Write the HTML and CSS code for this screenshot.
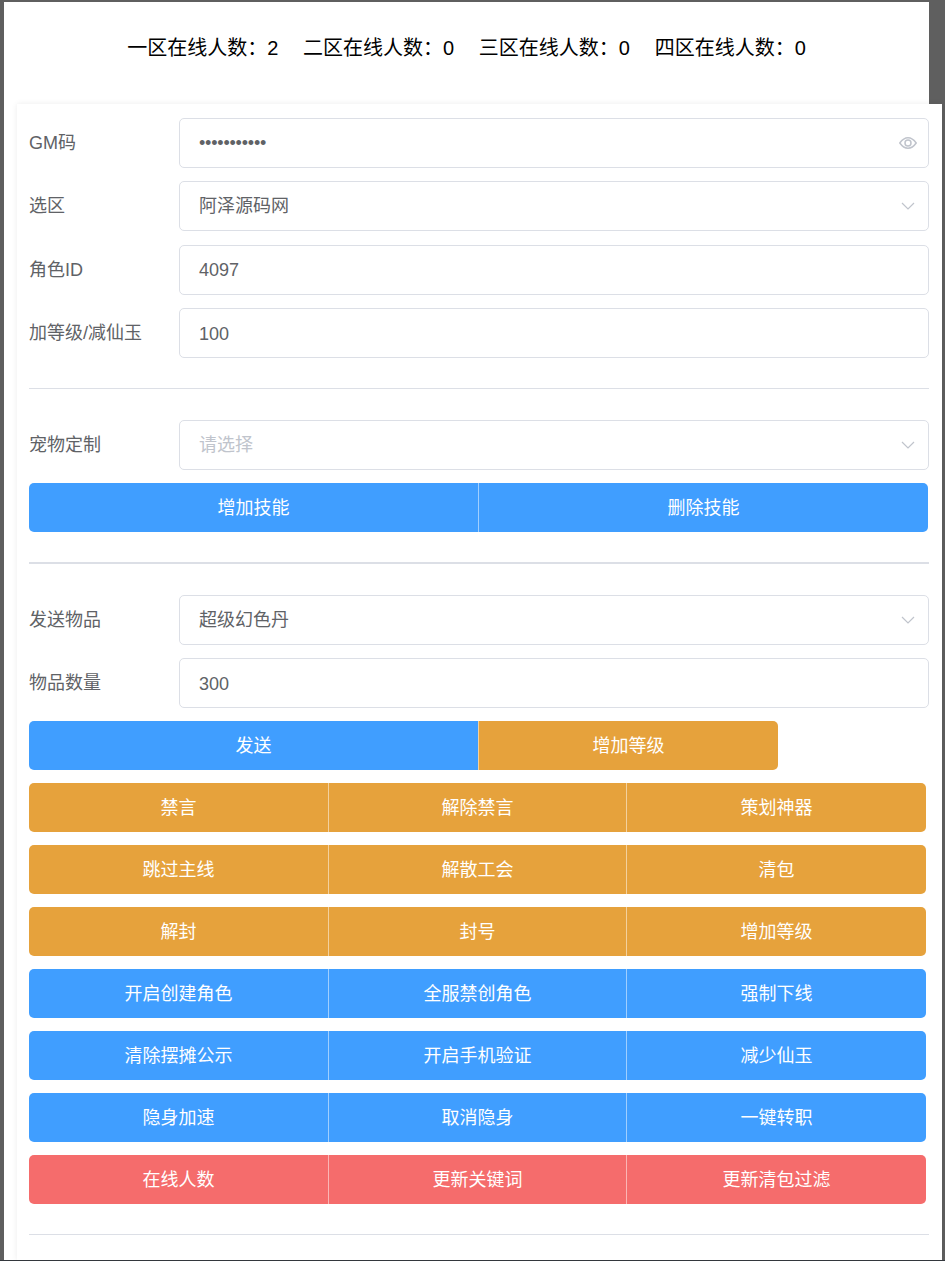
FILE: index.html
```html
<!DOCTYPE html>
<html lang="zh-CN">
<head>
<meta charset="utf-8">
<title>GM</title>
<link rel="stylesheet" href="styles.css">
</head>
<body>
<div class="frame">
  <div class="panel">
    <div class="online">
      <span>一区在线人数：2</span><span>二区在线人数：0</span><span>三区在线人数：0</span><span>四区在线人数：0</span>
    </div>
    <div class="card">
      <div class="form-group">
        <div class="row"><label class="label">GM码</label><div class="control"><span class="value dots">•••••••••••</span>
          <svg class="eye" viewBox="0 0 18 12"><path d="M0.800 6C3.300 2.500 6 0.800 9 0.800S14.700 2.500 17.200 6C14.700 9.500 12 11.200 9 11.200S3.300 9.500 0.800 6Z"/><circle cx="9" cy="6" r="3"/></svg></div></div>
        <div class="row"><label class="label">选区</label><div class="control"><span class="value cjk">阿泽源码网</span>
          <svg class="chev" viewBox="0 0 14 8"><path d="M1 1L7 7L13 1"/></svg></div></div>
        <div class="row"><label class="label">角色ID</label><div class="control"><span class="value num">4097</span></div></div>
        <div class="row"><label class="label">加等级/减仙玉</label><div class="control"><span class="value num">100</span></div></div>
      </div>
      <hr class="rule rule-a">
      <div class="row"><label class="label">宠物定制</label><div class="control"><span class="value cjk placeholder">请选择</span>
        <svg class="chev" viewBox="0 0 14 8"><path d="M1 1L7 7L13 1"/></svg></div></div>
      <div class="btns two first-btns"><button class="btn blue">增加技能</button><button class="btn blue">删除技能</button></div>
      <hr class="rule rule-b">
      <div class="form-group tight">
        <div class="row"><label class="label">发送物品</label><div class="control"><span class="value cjk">超级幻色丹</span>
          <svg class="chev" viewBox="0 0 14 8"><path d="M1 1L7 7L13 1"/></svg></div></div>
        <div class="row"><label class="label">物品数量</label><div class="control"><span class="value num">300</span></div></div>
      </div>
      <div class="btn-stack">
        <div class="btns send"><button class="btn blue">发送</button><button class="btn orange">增加等级</button></div>
        <div class="btns three"><button class="btn orange">禁言</button><button class="btn orange">解除禁言</button><button class="btn orange">策划神器</button></div>
        <div class="btns three"><button class="btn orange">跳过主线</button><button class="btn orange">解散工会</button><button class="btn orange">清包</button></div>
        <div class="btns three"><button class="btn orange">解封</button><button class="btn orange">封号</button><button class="btn orange">增加等级</button></div>
        <div class="btns three"><button class="btn blue">开启创建角色</button><button class="btn blue">全服禁创角色</button><button class="btn blue">强制下线</button></div>
        <div class="btns three"><button class="btn blue">清除摆摊公示</button><button class="btn blue">开启手机验证</button><button class="btn blue">减少仙玉</button></div>
        <div class="btns three"><button class="btn blue">隐身加速</button><button class="btn blue">取消隐身</button><button class="btn blue">一键转职</button></div>
        <div class="btns three"><button class="btn red">在线人数</button><button class="btn red">更新关键词</button><button class="btn red">更新清包过滤</button></div>
      </div>
      <hr class="rule rule-c">
    </div>
  </div>
</div>
</body>
</html>
```
FILE: styles.css
```css
* { box-sizing: border-box; }
html, body { margin: 0; padding: 0; height: 100%; overflow: hidden; }
body {
  background: #5f5f5f;
  font-family: "Liberation Sans", "Noto Sans CJK SC", sans-serif;
}
.frame {
  height: 1261px;
  padding: 2px 0 0 4px;
  border-bottom: 1px solid #33373d;
  overflow: hidden;
}
.panel {
  width: 925px;
  height: 1258px;
  background: #fff;
  padding-left: 13px;
}
.online {
  height: 102px;
  margin-left: -13px;
  padding-top: 32px;
  display: flex;
  justify-content: center;
  gap: 24.7px;
  font-size: 20px;
  line-height: 28px;
  color: #000;
}
.card {
  width: 925px;
  height: 1156px;
  background: #fff;
  box-shadow: 0 0 6px rgba(0, 0, 0, 0.08);
  padding: 14px 13px 0 12px;
}
.form-group { display: flex; flex-direction: column; gap: 13.4px; }
.form-group.tight { gap: 13px; }
.row { display: flex; align-items: center; height: 50px; }
.label { width: 150px; padding-bottom: 4px; font-size: 18px; color: #606266; flex: none; }
.control {
  flex: 1;
  height: 50px;
  border: 1px solid #dcdfe6;
  border-radius: 5px;
  padding: 0 19px;
  display: flex;
  align-items: center;
  justify-content: space-between;
  font-size: 18px;
  color: #606266;
}
.cjk { padding-bottom: 4px; }
.num { padding-top: 2px; }
.dots { letter-spacing: -0.2px; }
.placeholder { color: #c0c4cc; }
.eye { width: 18px; height: 12px; margin-right: -8px; margin-bottom: 1px; }
.eye path, .eye circle { fill: none; stroke: #c0c4cc; stroke-width: 1.5; }
.chev { width: 14px; height: 8px; margin-right: -6px; }
.chev path { fill: none; stroke: #c0c4cc; stroke-width: 1.2; }
.rule { border: 0; height: 1px; background: #dcdfe6; margin: 0; width: 900px; }
.rule-a { margin: 30px 0 31px; }
.rule-b { height: 2px; margin: 30px 0 31px; }
.rule-c { margin: 30px 0 0; }
.first-btns { margin-top: 13px; }
.btn-stack { display: flex; flex-direction: column; gap: 13px; margin-top: 13px; }
.btns { display: flex; height: 49px; }
.btn {
  height: 49px;
  border: 0;
  border-left: 1px solid rgba(255, 255, 255, 0.5);
  color: #fff;
  font-family: inherit;
  font-size: 18px;
  padding: 0 0 4px;
  flex: none;
}
.btn:first-child { border-left: 0; border-radius: 5px 0 0 5px; }
.btn:last-child { border-radius: 0 5px 5px 0; }
.blue { background: #409eff; }
.orange { background: #e6a23c; }
.red { background: #f56c6c; }
.two .btn { width: 450px; }
.two .btn:first-child { width: 449px; }
.send .btn:first-child { width: 449px; }
.send .btn:last-child { width: 300px; }
.three .btn { width: 298px; }
.three .btn:first-child { width: 299px; }
.three .btn:last-child { width: 300px; }
```
